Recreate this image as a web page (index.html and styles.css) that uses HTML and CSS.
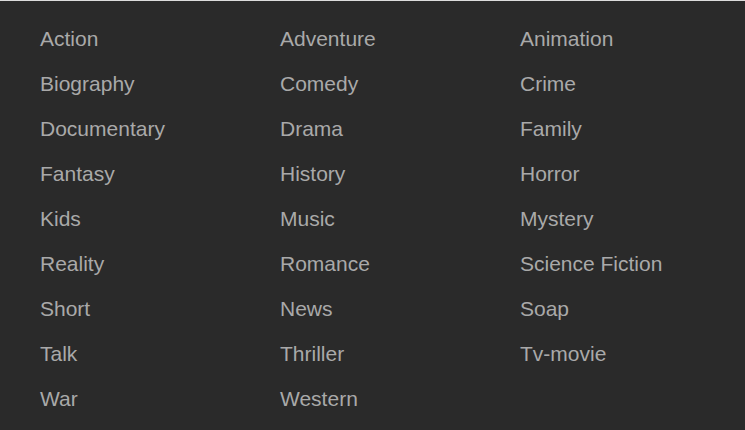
FILE: index.html
```html
<!DOCTYPE html>
<html>
<head>
<meta charset="utf-8">
<link rel="stylesheet" href="styles.css">
</head>
<body>
<div class="genres">
<a class="genre">Action</a><a class="genre">Adventure</a><a class="genre">Animation</a>
<a class="genre">Biography</a><a class="genre">Comedy</a><a class="genre">Crime</a>
<a class="genre">Documentary</a><a class="genre">Drama</a><a class="genre">Family</a>
<a class="genre">Fantasy</a><a class="genre">History</a><a class="genre">Horror</a>
<a class="genre">Kids</a><a class="genre">Music</a><a class="genre">Mystery</a>
<a class="genre">Reality</a><a class="genre">Romance</a><a class="genre">Science Fiction</a>
<a class="genre">Short</a><a class="genre">News</a><a class="genre">Soap</a>
<a class="genre">Talk</a><a class="genre">Thriller</a><a class="genre">Tv-movie</a>
<a class="genre">War</a><a class="genre">Western</a>
</div>
</body>
</html>
```
FILE: styles.css
```css
html, body {
  margin: 0;
  padding: 0;
  height: 100%;
  background: #2a2a2a;
}
body {
  border-top: 1px solid #dcdcdc;
  box-sizing: border-box;
  font-family: "Liberation Sans", Arial, sans-serif;
}
.genres {
  display: grid;
  grid-template-columns: 240px 240px 240px;
  grid-auto-rows: 45px;
  padding: 15px 0 0 40px;
}
.genre {
  font-size: 21px;
  line-height: 45px;
  color: #a9a9a9;
  white-space: nowrap;
}
```
